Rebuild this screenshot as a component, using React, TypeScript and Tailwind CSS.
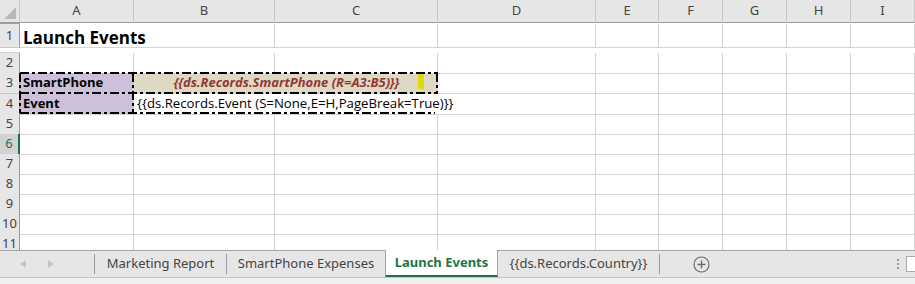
import React from "react";

const COLS = ["A", "B", "C", "D", "E", "F", "G", "H", "I"];
const ROW_HEIGHTS = [29, 20, 21, 20, 20, 20, 20, 20, 20, 20, 16];
const GRID = "grid grid-cols-[20px_114px_141px_163px_158px_63px_64px_64px_64px_1fr]";

const cellFont = { fontFamily: '"Open Sans", "Noto Sans", sans-serif' };
const uiFont = { fontFamily: '"Noto Sans", "Open Sans", sans-serif' };

const Corner = () => (
  <div className="relative h-[23px] bg-[#e6e6e6] border-r border-[#c8c8c8] border-b border-b-[#9b9b9b]">
    <svg className="absolute right-[3px] bottom-[3px]" width="12" height="12" viewBox="0 0 12 12">
      <polygon points="12,0 12,12 0,12" fill="#b8b8b8" />
    </svg>
  </div>
);

const DashDotFrame = () => {
  // medium dash-dot borders round A3:C4
  const dash = "9 3 3 3";
  return (
    <svg className="absolute left-0 top-0 pointer-events-none" width="440" height="120">
      <g stroke="#000" strokeWidth="2" strokeDasharray={dash} fill="none">
        <line x1="20" y1="73" x2="438" y2="73" />
        <line x1="20" y1="93" x2="438" y2="93" />
        <line x1="20" y1="113" x2="435" y2="113" />
        <line x1="20" y1="73" x2="20" y2="113" />
        <line x1="133" y1="73" x2="133" y2="113" />
        <line x1="437" y1="73" x2="437" y2="93" />
      </g>
    </svg>
  );
};

function Sheet() {
  return (
    <div className="relative">
      <div className={GRID}>
        <Corner />
        {COLS.map((c) => (
          <div
            key={c}
            className="h-[23px] bg-[#e6e6e6] border-r border-[#c8c8c8] border-b border-b-[#9b9b9b] flex items-center justify-center text-[13px] text-[#444]"
            style={uiFont}
          >
            {c}
          </div>
        ))}
        <div className="bg-[#e6e6e6] border-b border-[#9b9b9b] border-r-0" />
      </div>

      {ROW_HEIGHTS.map((h, i) => {
        const row = i + 1;
        const selected = row === 6;
        return (
          <div key={row} className={GRID} style={{ height: h }}>
            <div
              className={`flex items-center justify-center text-[13px] border-b border-[#c8c8c8] ${
                selected
                  ? "bg-[#d2d2d2] text-[#217346] border-r-2 border-r-[#217346]"
                  : "bg-[#e6e6e6] text-[#444] border-r border-r-[#9b9b9b]"
              }`}
              style={uiFont}
            >
              {row}
            </div>
            {row === 1 && (
              <>
                <div className="col-span-2 flex items-end pb-[1px] pl-[3px] border-b border-[#d4d4d4] border-r border-r-[#d4d4d4] overflow-visible whitespace-nowrap">
                  <span className="text-[17px] font-bold text-black leading-none" style={cellFont}>
                    Launch Events
                  </span>
                </div>
                {COLS.slice(2).map((c) => (
                  <div key={c} className="border-r border-b border-[#d4d4d4]" />
                ))}
              </>
            )}
            {row === 3 && (
              <>
                <div className="bg-[#ccc0da] flex items-center pl-[3px] border-b border-r border-[#d4d4d4]">
                  <span className="text-[13px] font-bold text-black" style={cellFont}>
                    SmartPhone
                  </span>
                </div>
                <div className="col-span-2 bg-[#ddd9c4] relative flex items-center justify-center border-b border-r border-[#d4d4d4]">
                  <span className="text-[13px] font-bold italic text-[#953735] pl-[2px]" style={cellFont}>
                    {"{{ds.Records.SmartPhone (R=A3:B5)}}"}
                  </span>
                  <div className="absolute right-[13px] top-[1px] w-[6px] h-[15px] bg-[#dcdc00]" />
                </div>
                {COLS.slice(3).map((c) => (
                  <div key={c} className="border-r border-b border-[#d4d4d4]" />
                ))}
              </>
            )}
            {row === 4 && (
              <>
                <div className="bg-[#ccc0da] flex items-center pl-[3px] border-b border-r border-[#d4d4d4]">
                  <span className="text-[13px] font-bold text-black" style={cellFont}>
                    Event
                  </span>
                </div>
                <div className="col-span-3 flex items-center pl-[3px] border-b border-r border-[#d4d4d4] whitespace-nowrap">
                  <span className="text-[13.2px] text-black" style={cellFont}>
                    {"{{ds.Records.Event (S=None,E=H,PageBreak=True)}}"}
                  </span>
                </div>
                {COLS.slice(4).map((c) => (
                  <div key={c} className="border-r border-b border-[#d4d4d4]" />
                ))}
              </>
            )}
            {row !== 1 && row !== 3 && row !== 4 &&
              COLS.map((c) => <div key={c} className="border-r border-b border-[#d4d4d4]" />)}
            <div className="border-b border-[#d4d4d4]" />
          </div>
        );
      })}
      <DashDotFrame />
    </div>
  );
}

function Tabs() {
  const Sep = () => <div className="w-px h-[20px] bg-[#9d9d9d]" />;
  return (
    <div className="h-[34px] bg-[#f0f0f0]">
      <div className="h-[28px] bg-[#e6e6e6] border-t border-[#a6a6a6] border-b border-b-[#c6c6c6] flex items-stretch text-[13px] text-[#444]" style={uiFont}>
        <div className="w-[94px] flex items-center pl-[20px] gap-[22px]">
          <svg width="6" height="8" viewBox="0 0 6 8"><polygon points="6,0 6,8 0,4" fill="#c4c4c4" /></svg>
          <svg width="6" height="8" viewBox="0 0 6 8"><polygon points="0,0 0,8 6,4" fill="#c4c4c4" /></svg>
        </div>
        <div className="flex items-center"><Sep /></div>
        <div className="w-[131px] flex items-center justify-center">Marketing Report</div>
        <div className="flex items-center"><Sep /></div>
        <div className="w-[158px] flex items-center justify-center">SmartPhone Expenses</div>
        <div className="-mt-px w-[113px] bg-white border-x border-[#a6a6a6] border-b-2 border-b-[#217346] flex items-center justify-center font-bold text-[#217346]">
          Launch Events
        </div>
        <div className="w-[161px] flex items-center justify-center">{"{{ds.Records.Country}}"}</div>
        <div className="flex items-center"><Sep /></div>
        <div className="w-[83px] flex items-center justify-center">
          <svg width="17" height="17" viewBox="0 0 17 17">
            <circle cx="8.5" cy="8.5" r="7.5" fill="none" stroke="#6e6e6e" strokeWidth="1.2" />
            <path d="M8.5 4.5v8M4.5 8.5h8" stroke="#6e6e6e" strokeWidth="1.4" />
          </svg>
        </div>
        <div className="flex-1" />
        <div className="w-[16px] flex flex-col items-center justify-center gap-[2px]">
          <div className="w-[2px] h-[2px] bg-[#9a9a9a]" />
          <div className="w-[2px] h-[2px] bg-[#9a9a9a]" />
          <div className="w-[2px] h-[2px] bg-[#9a9a9a]" />
        </div>
        <div className="w-[9px] flex items-center">
          <div className="w-[9px] h-[16px] bg-white border-l border-y border-[#ababab]" />
        </div>
      </div>
    </div>
  );
}

export default function App() {
  return (
    <div className="w-[915px] h-[284px] overflow-hidden bg-white flex flex-col">
      <div className="h-[250px] overflow-hidden">
        <Sheet />
      </div>
      <Tabs />
    </div>
  );
}
